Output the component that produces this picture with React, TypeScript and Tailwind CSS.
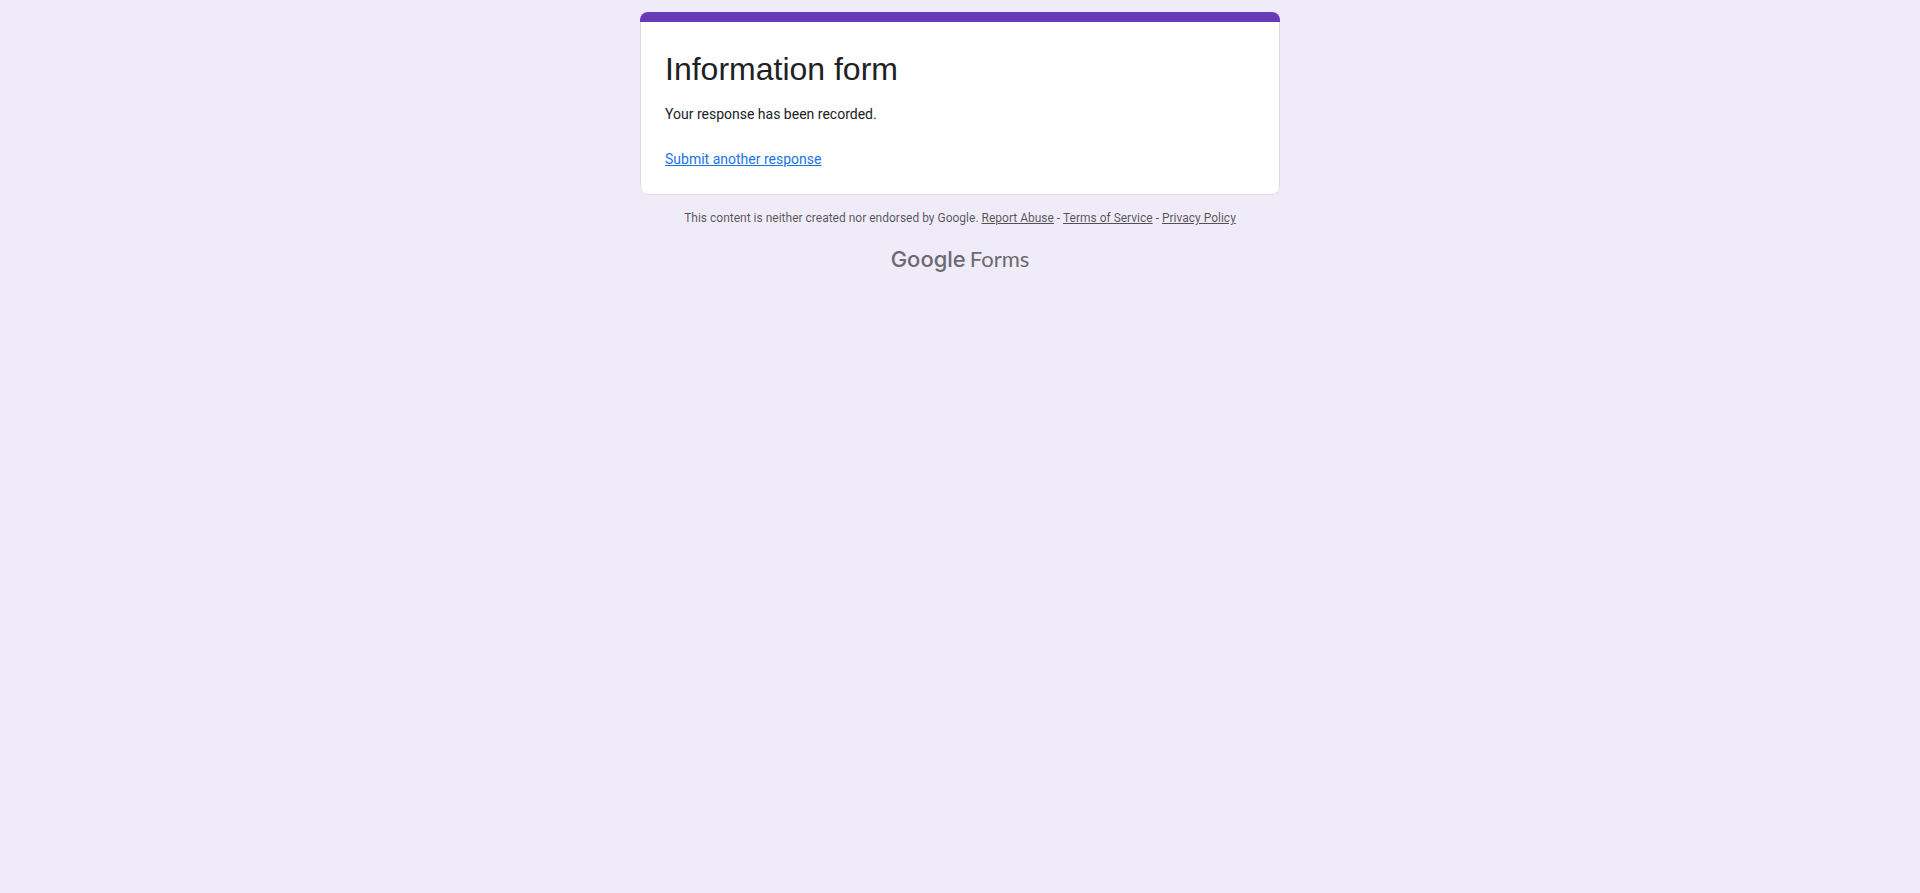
import React from "react";

const footerLinks = [
  { label: "Report Abuse", href: "#report-abuse" },
  { label: "Terms of Service", href: "#terms" },
  { label: "Privacy Policy", href: "#privacy" },
];

function ConfirmationCard() {
  return (
    <section className="overflow-hidden rounded-lg bg-white">
      <div className="h-[10px] bg-[#673ab7]" />
      <div className="rounded-b-lg border border-t-0 border-[#dadce0] px-6 pt-[27px] pb-[25px]">
        <h1 className="font-['Liberation_Sans',Arial,sans-serif] text-[32px] leading-10 text-[#202124]">
          Information form
        </h1>
        <p className="mt-[15px] text-sm leading-5 text-[#202124]">Your response has been recorded.</p>
        <a href="#form" className="mt-[25px] block w-fit text-sm leading-5 text-[#1a73e8] underline">
          Submit another response
        </a>
      </div>
    </section>
  );
}

export default function App() {
  return (
    <main className="min-h-screen bg-[#f0ebf8] px-4 py-3 font-[Roboto,sans-serif]">
      <div className="mx-auto max-w-[640px]">
        <ConfirmationCard />
        <footer className="text-center">
          <p className="mt-[15px] text-xs leading-4 text-black/66">
            This content is neither created nor endorsed by Google.{" "}
            {footerLinks.map((link, i) => (
              <React.Fragment key={link.label}>
                {i > 0 && " - "}
                <a href={link.href} className="underline">
                  {link.label}
                </a>
              </React.Fragment>
            ))}
          </p>
          <a
            href="#forms"
            className="mx-auto mt-[19px] flex w-fit items-baseline gap-1 text-[22px] leading-7 text-[#6c6970]"
          >
            <span className="font-[Inter,sans-serif] font-medium">Google</span>
            <span className="font-[Lato,sans-serif]">Forms</span>
          </a>
        </footer>
      </div>
    </main>
  );
}
